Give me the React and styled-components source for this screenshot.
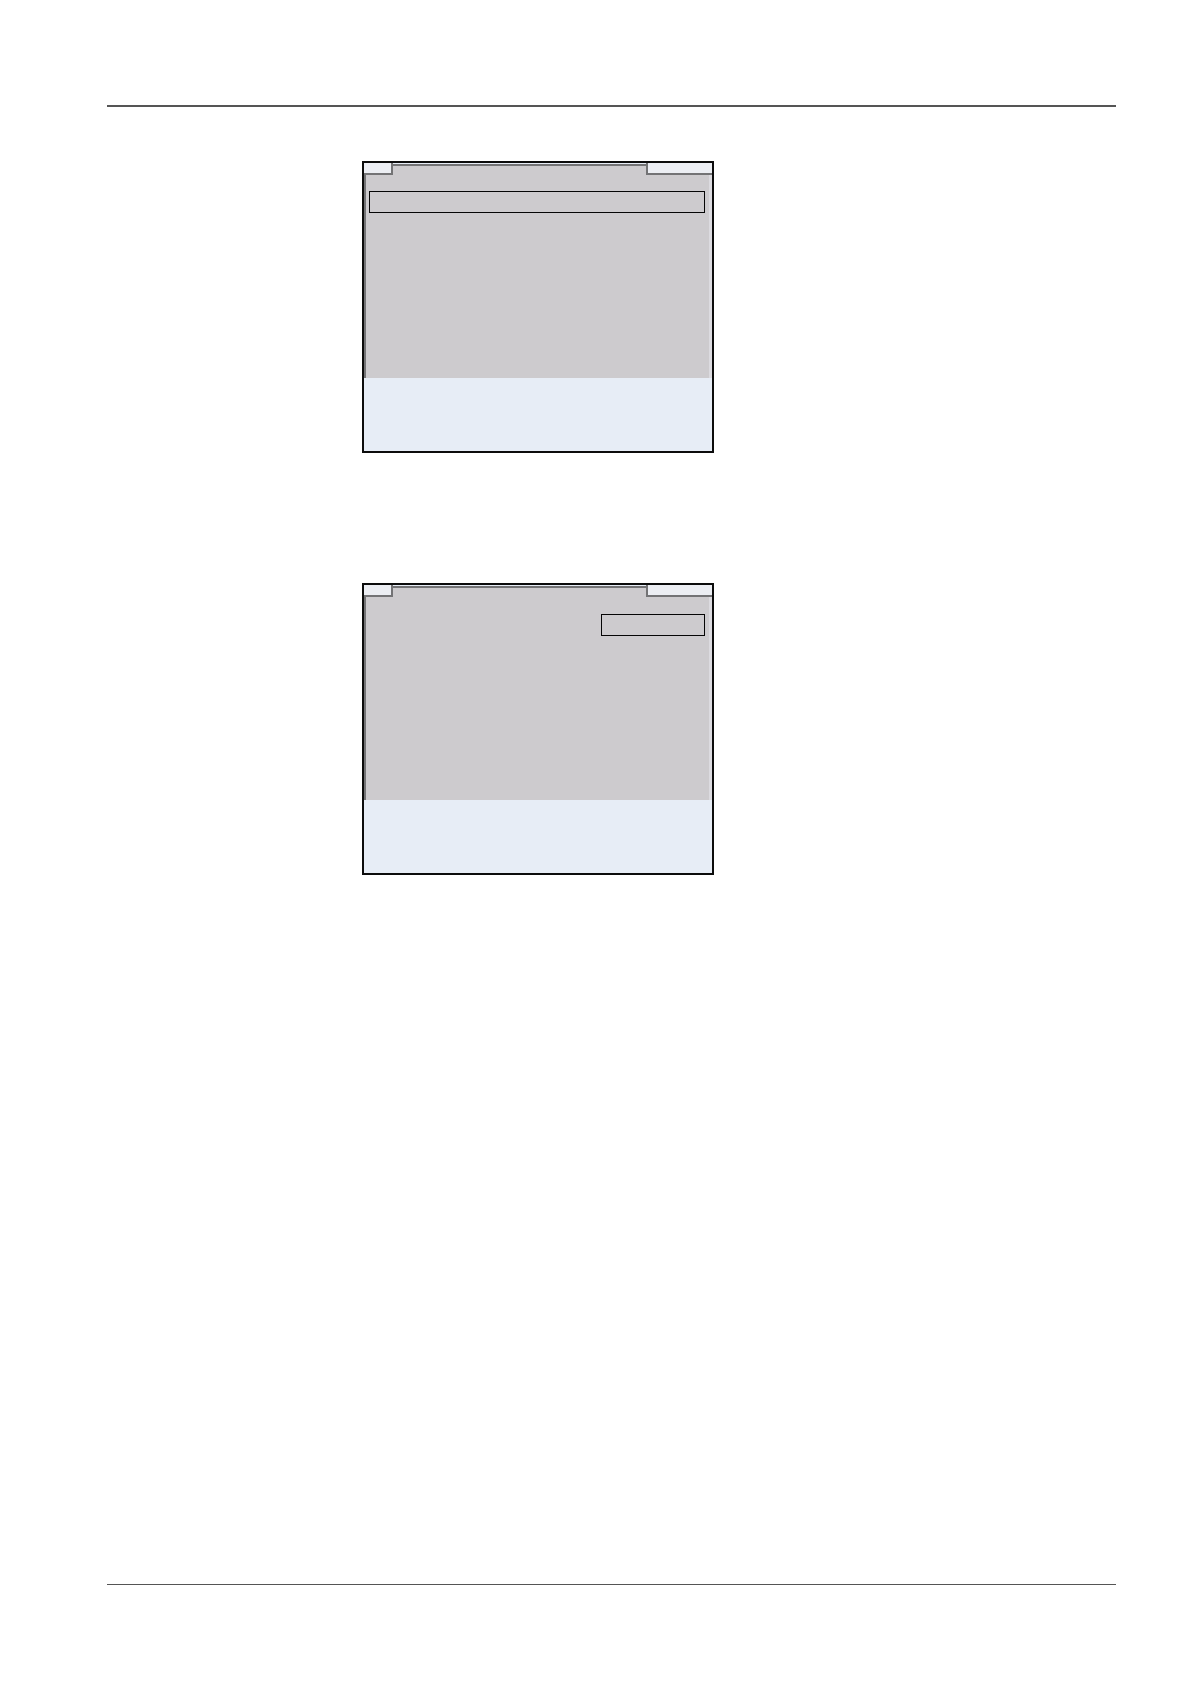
import React from "react";
import styled, { createGlobalStyle } from "styled-components";

const GlobalStyle = createGlobalStyle`
  html, body {
    margin: 0;
    padding: 0;
    background: #ffffff;
    font-family: "Liberation Sans", Arial, sans-serif;
  }
`;

const Page = styled.div`
  min-height: 1684px;
  box-sizing: border-box;
  display: flex;
  flex-direction: column;
  padding: 105px 74px 99px 107px;
`;

const Rule = styled.hr`
  margin: 0;
  border: none;
  height: 1.5px;
  background: #555555;
  width: 1009px;
`;

const Footer = styled(Rule)`
  margin-top: auto;
`;

const Figures = styled.div`
  display: flex;
  flex-direction: column;
  gap: 130px;
  padding: 54px 0 0 255px;
`;

const Screen = styled.div`
  width: 352px;
  height: 292px;
  box-sizing: border-box;
  border: 2.5px solid #0c0c0c;
  display: flex;
  flex-direction: column;
  background: #e7edf6;
`;

const TopStrip = styled.div`
  display: flex;
  height: 12px;
  flex-shrink: 0;
`;

const TabCorner = styled.div`
  width: ${(p) => p.$w}px;
  background: #eceef3;
  border-bottom: 2px solid #737375;
  ${(p) => (p.$side === "left" ? "border-right" : "border-left")}: 2px solid #737375;
  box-sizing: border-box;
`;

const TabTitle = styled.div`
  flex: 1;
  background: #cdcbce;
  border-top: 2px solid #737375;
  margin-top: 1px;
`;

const Display = styled.div`
  height: 203px;
  flex-shrink: 0;
  background: #cdcbce;
  border-left: 2px solid #737375;
  border-right: 3px solid #dcdbe0;
  box-sizing: border-box;
  display: flex;
  flex-direction: column;
  align-items: ${(p) => (p.$align === "right" ? "flex-end" : "stretch")};
  padding: ${(p) => p.$top}px 4px 0 3px;
`;

const Highlight = styled.div`
  width: ${(p) => (p.$w ? `${p.$w}px` : "auto")};
  height: 22px;
  box-sizing: border-box;
  border: 1.5px solid #050505;
`;

const SoftKeys = styled.div`
  flex: 1;
  background: #e7edf6;
`;

function DeviceScreen({ highlightWidth, align, top }) {
  return (
    <Screen>
      <TopStrip>
        <TabCorner $side="left" $w={29} />
        <TabTitle />
        <TabCorner $side="right" $w={66} />
      </TopStrip>
      <Display $align={align} $top={top}>
        <Highlight $w={highlightWidth} />
      </Display>
      <SoftKeys />
    </Screen>
  );
}

export default function App() {
  return (
    <>
      <GlobalStyle />
      <Page>
        <Rule />
        <Figures>
          <DeviceScreen top={16} />
          <DeviceScreen top={17} align="right" highlightWidth={104} />
        </Figures>
        <Footer />
      </Page>
    </>
  );
}
